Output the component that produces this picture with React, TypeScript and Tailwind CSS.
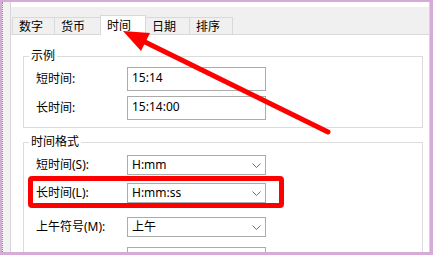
import React from "react";

function Chevron() {
  return (
    <svg width="9" height="5" viewBox="0 0 9 5" className="shrink-0">
      <polyline points="0.5,0.5 4.5,4.5 8.5,0.5" fill="none" stroke="#707070" strokeWidth="1" />
    </svg>
  );
}

function TextRow({ label, value }: { label: string; value: string }) {
  return (
    <div className="flex items-center h-[24px]">
      <div className="w-[91px] shrink-0">{label}</div>
      <div className="w-[139px] h-[24px] border border-[#ababab] pl-[4px] pt-[2px] leading-[16px]">{value}</div>
    </div>
  );
}

function ComboRow({ label, value, className }: { label: string; value: string; className?: string }) {
  return (
    <div className={"flex items-center h-[20px] " + (className ?? "")}>
      <div className="w-[91px] shrink-0">{label}</div>
      <div className="w-[139px] h-[20px] border border-[#ababab] pl-[4px] pr-[4px] flex items-center justify-between leading-[16px]">
        <span>{value}</span>
        <Chevron />
      </div>
    </div>
  );
}

const tabs = [
  { name: "数字", w: "w-[43px]" },
  { name: "货币", w: "w-[47px]" },
  { name: "时间", w: "w-[46px]", active: true },
  { name: "日期", w: "w-[45px]" },
  { name: "排序", w: "w-[44px]" },
];

export default function App() {
  return (
    <div className="relative w-[433px] h-[255px] overflow-hidden bg-white border-solid border-[#d8aad8] border-t-2 border-l-2 border-r-[3px] border-b-[3px] flex text-[12px] text-black font-['Noto_Sans','Noto_Sans_CJK_SC',sans-serif]">
      <div className="w-[8px] shrink-0 bg-[#f2f2f2] border-l border-dotted border-[#8c8c8c]" />
      <div className="flex-1 flex flex-col border-l border-r border-[#d6d6d6] min-w-0">
        <div className="h-[5px] bg-white shrink-0" />
        <div className="h-[28px] shrink-0 bg-[#f0f0f0] border-b border-[#dadada] flex items-end pl-[1px]">
          {tabs.map((t, i) =>
            t.active ? (
              <div
                key={t.name}
                className={`${t.w} h-[20px] -mb-px bg-white border border-b-0 border-[#d9d9d9] pl-[6px] leading-[19px] -ml-px`}
              >
                {t.name}
              </div>
            ) : (
              <div
                key={t.name}
                className={`${t.w} h-[18px] -mb-px bg-[#f0f0f0] border border-[#d9d9d9] pl-[6px] leading-[17px] ${i > 0 ? "-ml-px" : ""}`}
              >
                {t.name}
              </div>
            )
          )}
        </div>
        <div className="flex-1 bg-white pt-[21px] pl-[12px] pr-[6px] overflow-hidden">
          <div className="relative border border-[#dcdcdc] pt-[10px] pb-[7px] pl-[12px] flex flex-col gap-[5px]">
            <span className="absolute -top-[8px] left-[5px] bg-white px-[2px] leading-[14px]">示例</span>
            <TextRow label="短时间:" value="15:14" />
            <TextRow label="长时间:" value="15:14:00" />
          </div>
          <div className="relative mt-[14px] border border-[#dcdcdc] pt-[12px] pb-[10px] pl-[12px] flex flex-col">
            <span className="absolute -top-[8px] left-[5px] bg-white px-[2px] leading-[14px]">时间格式</span>
            <ComboRow label="短时间(S):" value="H:mm" />
            <ComboRow label="长时间(L):" value="H:mm:ss" className="mt-[8px]" />
            <ComboRow label="上午符号(M):" value="上午" className="mt-[14px]" />
            <div className="flex mt-[10px] h-[20px]">
              <div className="w-[91px] shrink-0" />
              <div className="w-[139px] h-[20px] border border-[#ababab]" />
            </div>
          </div>
        </div>
      </div>
      <svg className="absolute left-[-2px] top-[-2px] pointer-events-none" width="433" height="255" viewBox="0 0 433 255">
        <rect x="30.5" y="178.5" width="251" height="27" rx="1.5" fill="none" stroke="#ff0000" strokeWidth="5" />
        <line x1="144" y1="41.5" x2="328" y2="132" stroke="#ff0000" strokeWidth="5" strokeLinecap="round" />
        <polygon points="123,31 150,33 141,51" fill="#ff0000" />
      </svg>
    </div>
  );
}
